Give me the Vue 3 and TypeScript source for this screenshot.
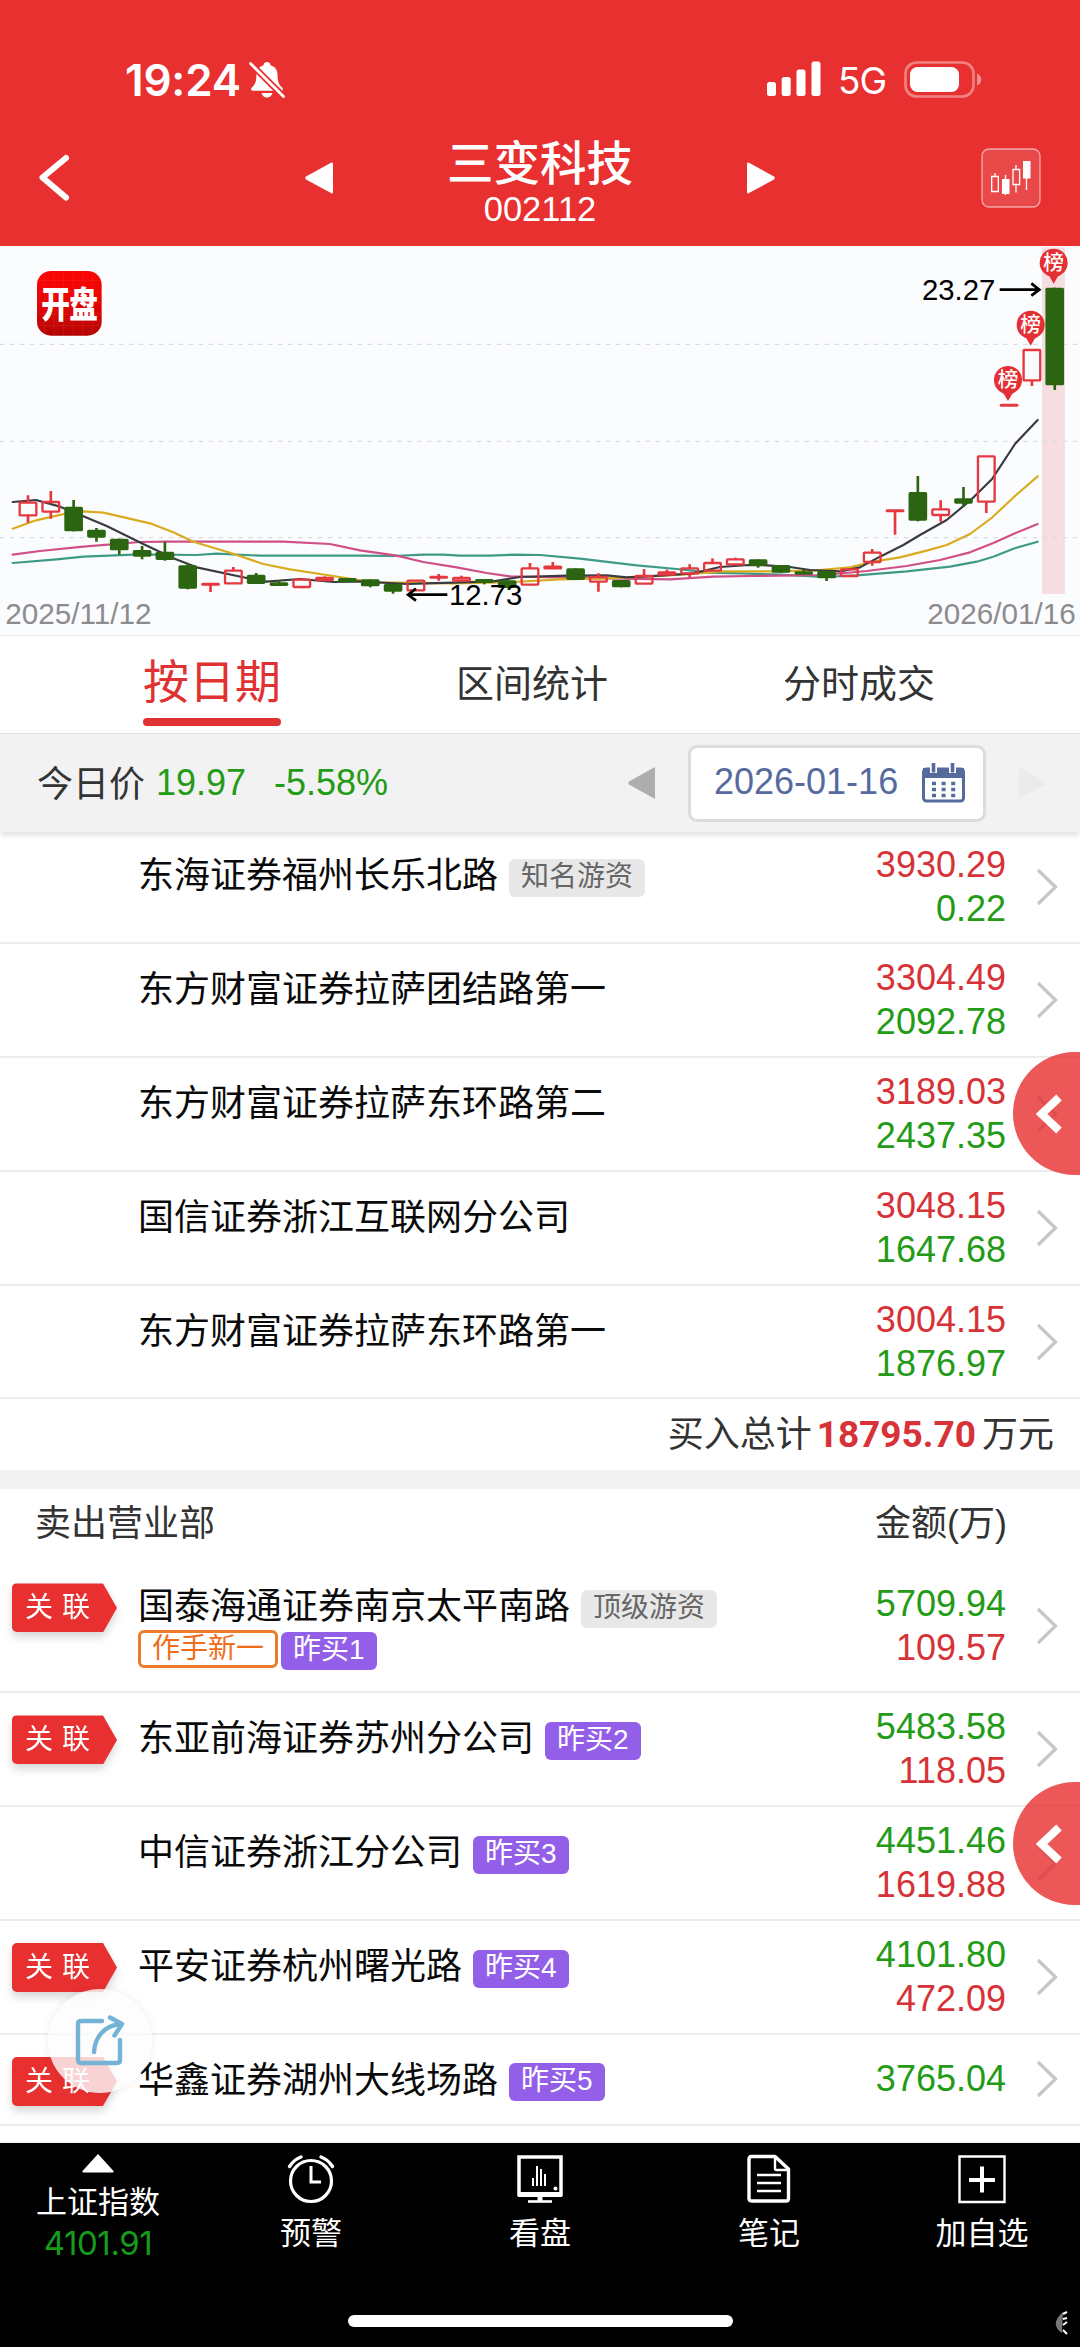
<script setup lang="ts">
type Tone = 'up' | 'down'

interface Tag { text: string; kind: 'grey' | 'orange' | 'violet' }
interface Seat {
  name: string
  linked?: boolean
  tags?: Tag[]
  extra?: Tag[]
  first: string
  second?: string
}

// Candle: tone, body top, body bottom, high, low (chart units, 3 per pixel)
type Candle = [Tone, number, number, number, number]

const candles: Candle[] = [
  ['up', 770, 808, 748, 830], ['up', 768, 797, 735, 818], ['down', 782, 856, 762, 856],
  ['down', 851, 875, 846, 887], ['down', 878, 913, 878, 926], ['down', 912, 932, 900, 940],
  ['down', 917, 942, 887, 944], ['down', 958, 1028, 952, 1030], ['up', 1014, 1016, 1012, 1038],
  ['up', 974, 1012, 963, 1012], ['down', 986, 1014, 981, 1014], ['down', 1009, 1020, 1003, 1020],
  ['up', 1001, 1023, 1000, 1027], ['up', 996, 1002, 991, 1002], ['down', 996, 1009, 996, 1009],
  ['down', 1000, 1021, 1000, 1024], ['down', 1014, 1037, 1014, 1043], ['up', 1004, 1033, 1004, 1033],
  ['up', 993, 995, 984, 1004], ['up', 996, 1004, 989, 1004], ['down', 999, 1011, 999, 1015],
  ['down', 1003, 1026, 1003, 1026], ['up', 967, 1016, 951, 1016], ['up', 962, 967, 948, 967],
  ['down', 967, 1002, 967, 1002], ['up', 993, 1007, 982, 1037], ['down', 1002, 1024, 1002, 1024],
  ['up', 990, 1013, 969, 1013], ['up', 979, 986, 971, 986], ['up', 967, 982, 955, 993],
  ['up', 951, 974, 937, 974], ['up', 940, 955, 935, 955], ['down', 940, 960, 940, 965],
  ['down', 957, 980, 957, 980], ['down', 976, 986, 971, 986], ['down', 975, 997, 975, 1005],
  ['up', 970, 990, 968, 990], ['up', 920, 948, 909, 959], ['up', 793, 795, 793, 866],
  ['down', 738, 824, 690, 826], ['up', 790, 807, 763, 827], ['down', 757, 773, 723, 783],
  ['up', 631, 767, 631, 801], ['up', 477, 479, 477, 479], ['up', 312, 403, 312, 420],
  ['down', 125, 418, 125, 432],
]
const cx = (i: number): number => 84 + i * 68.45

const averages = [
  { color: '#3e9a84', points: '38,951 170,940 250,932 420,925 590,927 650,923 780,929 1080,929 1180,930 1270,926 1330,926 1380,929 1470,929 1540,926 1620,927 1740,938 1910,958 2030,969 2130,980 2220,982 2340,986 2470,993 2570,988 2720,976 2850,962 2930,947 2980,932 3040,908 3113,887' },
  { color: '#cf4f86', points: '38,926 120,915 250,902 420,888 500,887 850,887 990,894 1080,913 1190,929 1270,948 1370,964 1460,981 1530,991 1680,994 1820,997 2010,1000 2140,992 2250,990 2340,989 2470,987 2600,975 2720,960 2820,942 2910,919 2980,891 3040,864 3113,834' },
  { color: '#d9ac1f', points: '38,848 108,823 200,802 250,796 310,800 450,832 520,859 580,887 690,920 790,954 870,970 1000,990 1080,1003 1136,1009 1360,1012 1540,1008 1680,1000 1820,997 1980,990 2080,984 2160,976 2246,976 2340,976 2450,973 2550,964 2620,947 2700,934 2780,914 2840,897 2910,864 2977,814 3045,750 3113,691' },
  { color: '#3a3b40', points: '38,768 108,762 180,782 250,811 320,840 425,892 520,937 590,964 740,996 800,1007 900,999 1000,1008 1080,1006 1220,1014 1280,1012 1360,1010 1480,1006 1560,993 1700,989 1820,988 1880,994 1980,989 2080,982 2160,963 2246,957 2300,958 2370,963 2430,972 2520,976 2580,964 2640,932 2710,897 2760,867 2840,822 2910,764 2977,698 3045,594 3113,522' },
]

const pins = [
  { x: 3161, y: 50 },
  { x: 3092, y: 236 },
  { x: 3024, y: 402 },
]

const buyers: Seat[] = [
  { name: '东海证券福州长乐北路', tags: [{ text: '知名游资', kind: 'grey' }], first: '3930.29', second: '0.22' },
  { name: '东方财富证券拉萨团结路第一', first: '3304.49', second: '2092.78' },
  { name: '东方财富证券拉萨东环路第二', first: '3189.03', second: '2437.35' },
  { name: '国信证券浙江互联网分公司', first: '3048.15', second: '1647.68' },
  { name: '东方财富证券拉萨东环路第一', first: '3004.15', second: '1876.97' },
]

const sellers: Seat[] = [
  {
    name: '国泰海通证券南京太平南路', linked: true, tags: [{ text: '顶级游资', kind: 'grey' }],
    extra: [{ text: '作手新一', kind: 'orange' }, { text: '昨买1', kind: 'violet' }],
    first: '5709.94', second: '109.57',
  },
  { name: '东亚前海证券苏州分公司', linked: true, tags: [{ text: '昨买2', kind: 'violet' }], first: '5483.58', second: '118.05' },
  { name: '中信证券浙江分公司', tags: [{ text: '昨买3', kind: 'violet' }], first: '4451.46', second: '1619.88' },
  { name: '平安证券杭州曙光路', linked: true, tags: [{ text: '昨买4', kind: 'violet' }], first: '4101.80', second: '472.09' },
  { name: '华鑫证券湖州大线场路', linked: true, tags: [{ text: '昨买5', kind: 'violet' }], first: '3765.04' },
]

const groups: { side: string; seats: Seat[] }[] = [
  { side: 'buy', seats: buyers },
  { side: 'sell', seats: sellers },
]
</script>

<template>
  <div class="screen">
    <header class="top">
      <div class="status">
        <div class="clock">
          <span class="time">19:24</span>
          <svg width="38" height="38" viewBox="0 0 38 38">
            <path d="M19 1c-2.300 0-3.500 1.500-3.500 3.200C10.500 5.600 8.400 9.500 8.400 14c0 7-1.400 9.700-4.500 12.600-1.600 1.600-.9 3.200 1.100 3.200h28c2 0 2.700-1.600 1.100-3.200-3.100-2.900-4.500-5.600-4.500-12.600 0-4.500-2.100-8.400-7.100-9.800C22.500 2.500 21.300 1 19 1zM13.500 32c.6 2.700 2.700 4.600 5.500 4.600s4.900-1.900 5.500-4.600z" fill="#fff" />
            <path d="M3 3L35.500 35.500" stroke="#e83030" stroke-width="6.500" />
            <path d="M2.500 2.500L35.500 35.500" stroke="#fff" stroke-width="2.800" stroke-linecap="round" />
          </svg>
        </div>
        <div class="radio">
          <svg width="54" height="35" viewBox="0 0 54 35" fill="#fff">
            <rect x="0" y="21" width="9" height="14" rx="2.500" />
            <rect x="14.700" y="16" width="9" height="19" rx="2.500" />
            <rect x="29.500" y="8.500" width="9" height="26.500" rx="2.500" />
            <rect x="44.500" y="0.500" width="9" height="34.500" rx="2.500" />
          </svg>
          <span class="net">5G</span>
          <svg width="78" height="37" viewBox="0 0 78 37">
            <rect x="1.500" y="1.500" width="68" height="34" rx="11" fill="none" stroke="#fff" stroke-opacity=".4" stroke-width="2.600" />
            <rect x="6" y="6" width="49" height="25" rx="7.500" fill="#fff" />
            <path d="M73 12.500c2.800 1 4.300 3.200 4.300 6s-1.500 5-4.300 6z" fill="#fff" fill-opacity=".45" />
          </svg>
        </div>
      </div>
      <div class="nav">
        <svg class="back" width="32" height="48" viewBox="0 0 32 48"><path d="M28 4L4.500 23.500 28 43.500" fill="none" stroke="#fff" stroke-width="6" stroke-linecap="round" stroke-linejoin="round" /></svg>
        <svg class="prev" width="28" height="32" viewBox="0 0 28 32"><path d="M28 2v28c0 1.500-1 2-2 1L1 17.500q-1.500-1.500 0-3L26 .8c1-.8 2-.3 2 1.200z" fill="#fff" /></svg>
        <div class="stock">
          <h1>三变科技</h1>
          <p>002112</p>
        </div>
        <svg class="next" width="28" height="32" viewBox="0 0 28 32"><path d="M0 2v28c0 1.500 1 2 2 1l25-13.500q1.500-1.500 0-3L2 .8C1 0 0 .5 0 2z" fill="#fff" /></svg>
        <svg class="mini" width="60" height="60" viewBox="0 0 60 60">
          <rect x="1" y="1" width="58" height="58" rx="7" fill="#fff" fill-opacity=".12" stroke="#fff" stroke-opacity=".55" stroke-width="1.300" />
          <g fill="none" stroke="#fff" stroke-width="1.300">
            <path d="M14 25v3.500M10.700 28.500h6.600v15h-6.600zM24.500 27v20M35 17v4.500M35 36.500v8M32 21.500h6.600v15H32zM45.500 13v29" />
          </g>
          <path d="M21 31h7.500v15H21zM42 13h7.500v17.500H42z" fill="#fff" />
        </svg>
      </div>
    </header>

    <section class="chart">
      <svg viewBox="0 0 3240 1167" width="1080" height="389">
        <defs>
          <linearGradient id="logo" x1="0" y1="0" x2="0" y2="1">
            <stop offset="0" stop-color="#fb0505" />
            <stop offset=".45" stop-color="#e90606" />
            <stop offset="1" stop-color="#b40505" />
          </linearGradient>
        </defs>
        <rect x="3126" y="4" width="69" height="1040" fill="#f6dde2" />
        <g stroke="#d9dbe0" stroke-width="4" stroke-dasharray="13 16.800">
          <path d="M0 295H3240M0 586H3240M0 875H3240" />
        </g>
        <rect x="111" y="75" width="194" height="194" rx="42" fill="url(#logo)" />
        <path d="M133 80v184M162 76v192M191 76v192M220 76v192M249 76v192M278 80v184M112 103h192M112 136h192M112 170h192M112 205h192M112 239h192" stroke="#ff5a3c" stroke-opacity=".28" stroke-width="2" />
        <text x="0" y="0" class="logo-text" transform="translate(124 215) scale(1 1.250)">开盘</text>
        <g fill="none" stroke-width="6.500" stroke-linejoin="round" stroke-linecap="round">
          <polyline v-for="line in averages" :key="line.color" :points="line.points" :stroke="line.color" />
        </g>
        <g v-for="([tone, top, bottom, high, low], i) in candles" :key="i">
          <template v-if="tone === 'up'">
            <path :d="`M${cx(i)} ${high}V${top}M${cx(i)} ${bottom}V${low}`" stroke="#e4393f" stroke-width="8" />
            <rect :x="cx(i) - 25" :y="top" width="50" :height="bottom - top" rx="2" fill="none" stroke="#e4393f" stroke-width="7" />
          </template>
          <template v-else>
            <path :d="`M${cx(i)} ${high}V${low}`" stroke="#2c6511" stroke-width="8" />
            <rect :x="cx(i) - 28" :y="top" width="56" :height="bottom - top" rx="5" fill="#2c6511" />
          </template>
        </g>
        <g v-for="pin in pins" :key="pin.x">
          <path :d="`M${pin.x} ${pin.y + 63}l-13 -22C${pin.x - 28} ${pin.y + 34} ${pin.x - 42} ${pin.y + 22} ${pin.x - 42} ${pin.y}a42 42 0 0 1 84 0C${pin.x + 42} ${pin.y + 22} ${pin.x + 28} ${pin.y + 34} ${pin.x + 13} ${pin.y + 41}z`" fill="#e43034" />
          <text :x="pin.x" :y="pin.y + 22" class="pin-text">榜</text>
        </g>
        <g fill="none" stroke="#000" stroke-width="8">
          <path d="M1222 1046H1342M1248 1028L1224 1046l24 18M2999 131H3120M3094 112L3118 131l-24 18" />
        </g>
        <text x="1347" y="1076" class="price">12.73</text>
        <text x="2766" y="161" class="price">23.27</text>
        <text x="16" y="1135" class="day">2025/11/12</text>
        <text x="3227" y="1135" class="day end">2026/01/16</text>
      </svg>
    </section>

    <nav class="tabs">
      <span class="tab active">按日期</span>
      <span class="tab">区间统计</span>
      <span class="tab last">分时成交</span>
    </nav>

    <section class="quote">
      <span class="label">今日价</span>
      <span class="val">19.97</span>
      <span class="pct">-5.58%</span>
      <svg class="arrow" width="27" height="34" viewBox="0 0 27 34"><path d="M27 1v32L1 18.500q-1.500-1.500 0-3z" fill="#adadad" /></svg>
      <div class="date">
        <span>2026-01-16</span>
        <svg width="43" height="40" viewBox="0 0 43 40">
          <rect x="1.500" y="6" width="40" height="32" rx="3" fill="#fff" stroke="#566b9d" stroke-width="3" />
          <path d="M1 5h41v10H1z" fill="#566b9d" />
          <path d="M11.500 0v10M30.500 0v10" stroke="#fff" stroke-width="7" />
          <path d="M11.500 0v9.500M30.500 0v9.500" stroke="#566b9d" stroke-width="3.600" />
          <path d="M10 20.500h24M10 26.500h24M10 32.500h24" stroke="#566b9d" stroke-width="3.600" stroke-dasharray="4 5.600" />
        </svg>
      </div>
      <svg class="arrow-off" width="28" height="34" viewBox="0 0 28 34"><path d="M0 1v32l26-14.500q1.500-1.500 0-3z" fill="#ebebeb" /></svg>
    </section>

    <template v-for="group in groups" :key="group.side">
      <div v-if="group.side === 'sell'" class="heading">
        <span>卖出营业部</span>
        <span>金额(万)</span>
      </div>
      <section class="list" :class="group.side">
        <article v-for="seat in group.seats" :key="seat.name" class="row" :class="{ tall: seat.extra, short: !seat.second }">
          <div class="flag-col">
            <div v-if="seat.linked" class="flag-shadow"><div class="flag"><span>关</span><span>联</span></div></div>
          </div>
          <div class="who">
            <div class="line">
              <span class="name">{{ seat.name }}</span>
              <span v-for="tag in seat.tags" :key="tag.text" class="tag" :class="tag.kind">{{ tag.text }}</span>
            </div>
            <div v-if="seat.extra" class="line second">
              <span v-for="tag in seat.extra" :key="tag.text" class="tag" :class="tag.kind">{{ tag.text }}</span>
            </div>
          </div>
          <div class="sums">
            <span>{{ seat.first }}</span>
            <span v-if="seat.second">{{ seat.second }}</span>
          </div>
          <svg class="chev" width="22" height="38" viewBox="0 0 22 38"><path d="M2 2L19.500 19 2 36" fill="none" stroke="#c7c7c9" stroke-width="3.300" /></svg>
        </article>
      </section>
      <div v-if="group.side === 'buy'" class="total">
        <span>买入总计</span><b>18795.70</b><span>万元</span>
      </div>
    </template>
    <div class="rest"></div>

    <footer class="bar">
      <div class="item index">
        <svg width="32" height="19" viewBox="0 0 32 19"><path d="M16 0l15.500 17q.5 1.500-1 1.500H1.500Q0 18.500.500 17z" fill="#fff" /></svg>
        <span>上证指数</span>
        <span class="points">4101.91</span>
      </div>
      <div class="item alarm">
        <svg width="48" height="50" viewBox="0 0 48 50" fill="none" stroke="#fff" stroke-linecap="round">
          <circle cx="24" cy="27" r="20.500" stroke-width="3.200" />
          <path d="M24 12v16h10" stroke-width="3" stroke-linecap="butt" />
          <path d="M2.500 12.500Q7 5.500 14 3M45.500 12.500Q41 5.500 34 3" stroke-width="3.400" />
        </svg>
        <span>预警</span>
      </div>
      <div class="item board">
        <svg width="48" height="50" viewBox="0 0 48 50" fill="none" stroke="#fff">
          <path d="M3 3h42v37.500H3z" stroke-width="3.500" />
          <path d="M2 40.500h44" stroke-width="5" />
          <path d="M12 47.500h24" stroke-width="2.600" />
          <path d="M24 42v5" stroke-width="5" />
          <path d="M17 24v8M21 12v20M25 15v17M29 20v12" stroke-width="2" />
          <circle cx="39.500" cy="34.500" r="2" fill="#fff" stroke="none" />
        </svg>
        <span>看盘</span>
      </div>
      <div class="item note">
        <svg width="48" height="50" viewBox="0 0 48 50" fill="none" stroke="#fff" stroke-linejoin="round">
          <path d="M6.500 2.500H30L43.500 15v29.500q0 2.500-2.500 2.500H6.500Q4 47 4 44.500V5Q4 2.500 6.500 2.500z" stroke-width="3.400" />
          <path d="M30 3v11.500q0 1.500 1.500 1.500H43" stroke-width="2.400" />
          <path d="M12 21h24M12 29h24M12 37h24" stroke-width="2.600" />
        </svg>
        <span>笔记</span>
      </div>
      <div class="item add">
        <svg width="48" height="50" viewBox="0 0 48 50" fill="none" stroke="#fff">
          <path d="M1.500 2.500h45v45.500h-45z" stroke-width="2.400" />
          <path d="M24 12.500v26M11 26h26" stroke-width="4" />
        </svg>
        <span>加自选</span>
      </div>
    </footer>
    <div class="home"></div>
    <svg class="corner" width="16" height="24" viewBox="0 0 16 24">
      <path d="M10 1Q-4 13 9 22z" fill="#777" />
      <path d="M10 3l4-2M10 8l4-1M10 14l4-3M10 19l4 4" stroke="#fff" stroke-width="2" />
    </svg>

    <button v-for="n in 2" :key="n" class="drawer" :class="'d' + n">
      <svg width="26" height="40" viewBox="0 0 26 40"><path d="M23 3.500L5.500 20 23 36.500" fill="none" stroke="#fff" stroke-width="8" /></svg>
    </button>
    <button class="share">
      <svg width="50" height="52" viewBox="0 0 50 52" fill="none" stroke="#74b3d6" stroke-width="4.400" stroke-linecap="round" stroke-linejoin="round">
        <path d="M27 6H6Q3 6 3 9v36q0 3 3 3h36q3 0 3-3V25" />
        <path d="M19 37C20 22 29 11 45 9" />
        <path d="M35 2.500L47 9 39.500 20.500" />
      </svg>
    </button>
  </div>
</template>

<style>
body { margin: 0; background: #fff; }
</style>

<style scoped>
.screen {
  position: relative;
  width: 1080px;
  height: 2347px;
  overflow: hidden;
  display: flex;
  flex-direction: column;
  background: #fff;
  font-family: "Liberation Sans", "Noto Sans CJK SC", sans-serif;
  font-size: 36px;
  color: #333;
}
.screen > * { flex-shrink: 0; }
svg { display: block; flex-shrink: 0; }

.top { height: 246px; background: #e83030; color: #fff; }
.status { display: flex; justify-content: space-between; height: 98px; padding: 61px 98px 0 125px; box-sizing: border-box; }
.clock, .radio { display: flex; }
.time { font: 600 44px/38px Inter, sans-serif; width: 123px; white-space: nowrap; letter-spacing: -.2px; }
.net { font: 400 37px/40px Inter, sans-serif; width: 66px; margin-left: 17px; letter-spacing: -1px; }
.nav { display: flex; height: 148px; }
.back { margin: 56px 0 0 38px; }
.prev { margin: 64px 0 0 235px; }
.stock { width: 414px; text-align: center; }
h1 { margin: 41px 0 0; font-size: 46.500px; line-height: 50px; font-weight: 500; }
.stock p { margin: 0; font-size: 34.500px; line-height: 40px; }
.next { margin-top: 64px; }
.mini { margin: 50px 0 0 206px; }

.chart { height: 389px; background: #fbfcfe; border-bottom: 1px solid #e8e9ea; }
.logo-text { font: 900 86px "Noto Sans CJK SC", sans-serif; fill: #fff; letter-spacing: -2px; }
.pin-text { font: 500 62px "Noto Sans CJK SC", sans-serif; fill: #fff; text-anchor: middle; }
.price { font-size: 88px; fill: #000; }
.day { font-size: 89px; fill: #8c8c8e; }
.end { text-anchor: end; }

.tabs { display: flex; height: 97px; align-items: flex-start; border-bottom: 1px solid #e6e6e6; font-size: 38px; }
.tab { margin: 20px 0 0 175px; width: 152px; line-height: 56px; color: #333; white-space: nowrap; }
.tab.active { position: relative; margin: 18px 0 0 143px; width: 138px; height: 72px; font-size: 46px; line-height: 57px; color: #e03232; }
.tab.active::after { content: ""; position: absolute; left: 0; bottom: 0; width: 138px; height: 8px; border-radius: 4px; background: #e03232; }
.tab.last { margin-left: 175px; }

.quote { display: flex; align-items: center; height: 98px; background: #f2f2f2; box-shadow: 0 3px 6px rgba(0, 0, 0, .13); }
.label { margin-left: 37px; width: 119px; padding-bottom: 5px; }
.val, .pct { color: #239b17; }
.val { width: 118px; }
.arrow { margin-left: auto; }
.quote .date { display: flex; align-items: center; justify-content: space-between; box-sizing: border-box; width: 298px; height: 77px; margin: 0 0 0 33px; padding: 0 18px 0 23px; border: 3px solid #dcdcdc; border-radius: 9px; background: #fff; color: #566b9d; }
.quote .date span { padding-bottom: 2px; }
.arrow-off { margin: 0 33px 0 33px; }

.list { display: flex; flex-direction: column; }
.row { display: flex; align-items: center; box-sizing: border-box; height: 113.800px; border-bottom: 2px solid #ececec; }
.buy .row:first-child { height: 112.300px; }
.buy .row:first-child .who { padding-top: 22px; }
.row.tall { height: 132px; }
.row.short { height: 91px; }
.flag-col { align-self: flex-start; width: 138px; padding: 22px 0 0 12px; box-sizing: border-box; }
.flag-shadow { filter: drop-shadow(0 5px 4px rgba(0, 0, 0, .16)); }
.flag { display: flex; gap: 9px; width: 105px; height: 49px; padding-left: 13px; box-sizing: border-box; border-radius: 5px 0 0 5px; background: #e83030; clip-path: polygon(0 0, 91px 0, 105px 50%, 91px 100%, 0 100%); color: #fff; font-size: 28px; line-height: 49px; }
.who { align-self: flex-start; flex: 1; padding-top: 24px; }
.line { display: flex; height: 44px; align-items: center; }
.name { color: #0a0a0a; line-height: 44px; white-space: nowrap; }
.tag { box-sizing: border-box; height: 38px; margin: 3px 0 0 11px; padding: 0 12px; border-radius: 6px; font-size: 28px; line-height: 36px; white-space: nowrap; }
.grey { background: #e8e8e8; color: #666; }
.violet { background: #935fe8; color: #fff; }
.orange { border: 3px solid #ee7a2e; color: #ee6d1c; line-height: 32px; padding: 0 11px; }
.second { height: 41px; align-items: flex-start; }
.second .tag { margin: 1px 0 0; }
.second .violet { margin: 3px 0 0 3px; }
.sums { display: flex; flex-direction: column; width: 180px; text-align: right; line-height: 44px; }
.buy .sums span, .sell .sums span + span { color: #d63237; }
.buy .sums span + span, .sell .sums span { color: #239b17; }
.chev { margin: 0 22px 0 30px; }

.total { display: flex; height: 71px; line-height: 71px; justify-content: flex-end; padding-right: 26px; border-bottom: 19px solid #f2f2f2; }
.total b { margin: 0 6px 0 5px; font: 700 37px/72px Roboto, sans-serif; color: #d63237; }
.heading { display: flex; justify-content: space-between; height: 72px; line-height: 69px; padding: 0 73px 0 35px; }
.rest { height: 16px; border-bottom: 1px solid #eee; }

.bar { flex: 1; display: flex; background: #000; color: #fff; font-size: 31px; }
.item { display: flex; flex-direction: column; align-items: center; padding-top: 11px; width: 140px; }
.item span { line-height: 36px; margin-top: 12px; white-space: nowrap; }
.index { margin-left: 28px; }
.index span { margin-top: 12px; }
.item .points { margin-top: 4px; font: 400 33px/36px Inter, sans-serif; color: #169b1b; letter-spacing: -.4px; }
.alarm { margin-left: 73px; }
.board { margin-left: 89px; }
.note { margin-left: 89px; }
.add { margin-left: 73px; }
.home { position: absolute; left: 348px; bottom: 20px; width: 385px; height: 12px; border-radius: 6px; background: #fff; }
.corner { position: absolute; right: 11px; bottom: 12px; }

button { padding: 0; border: 0; }
.drawer { position: absolute; right: 0; width: 67px; height: 123px; padding-left: 23px; border-radius: 61.500px 0 0 61.500px; background: rgba(231, 46, 46, .8); }
.d1 { top: 1052px; }
.d2 { top: 1782px; }
.share { position: absolute; left: 48px; top: 1989px; width: 104px; height: 104px; padding-left: 27px; border-radius: 50%; background: rgba(252, 252, 252, .8); box-shadow: 0 0 8px rgba(0, 0, 0, .08); }
</style>
